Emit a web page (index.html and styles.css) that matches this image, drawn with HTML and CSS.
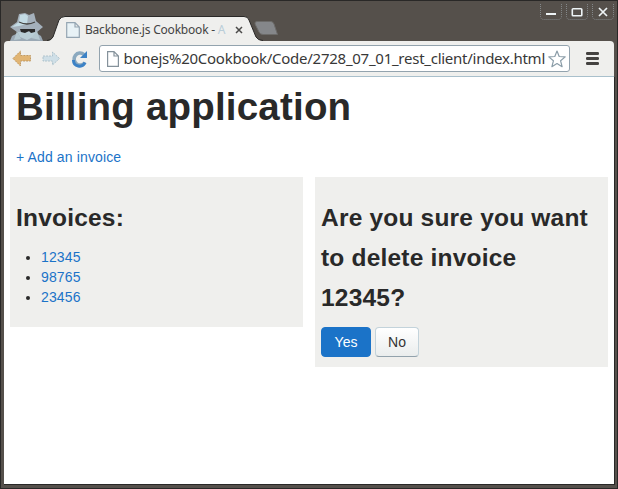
FILE: index.html
```html
<!DOCTYPE html>
<html lang="en">
<head>
<meta charset="utf-8">
<title>Backbone.js Cookbook</title>
<link rel="stylesheet" href="styles.css">
</head>
<body>
<div class="window">
  <header class="titlebar">
    <svg class="incognito" width="36" height="28" viewBox="0 0 36 28">
      <path d="M1 28 3 23 9 20H27L32 23 34 28Z" fill="#9ba9b5"/>
      <path d="M8 11H28V18L24 24 18 27 11 24 8 18Z" fill="#b9cdd5"/>
      <path d="M1 14 8 9 10 1 16 0 20 2 25 0 27 8 34 14 28 19H8Z" fill="#a4b0bb"/>
      <path d="M10 9 11 2 16 1 19 3 18 11 10 13 3 14Z" fill="#c3dbe4"/>
      <path d="M10 9Q18 13 26 9" fill="none" stroke="#454341" stroke-width="1.3"/>
      <path d="M11 16H26V19L22 20 20 18 16 20 12 19Z" fill="#292929"/>
      <path d="m8 18 4 8-7 1zM22 25l6-7 3 9z" fill="#b4c7cf"/>
    </svg>
    <div class="tab">
      <svg class="tab-shape" width="216" height="25" viewBox="0 0 216 25">
        <path d="M0 25Q4 25 6 21L12 4Q14 .5 18 .5H197Q201 .5 202 4L209 21Q211 24 216 25Z" fill="#efefed"/>
        <path d="M0 24.5Q4 24.5 6 21L12 4Q14 .5 18 .5H197Q201 .5 202 4L209 21Q211 24.5 216 24.5" fill="none" stroke="#292827"/>
      </svg>
      <svg class="page-icon" width="14" height="16" viewBox="0 0 14 16"><path d="M.7.7H9L13.3 5V15.3H.7ZM9 .7V5H13.3" fill="#e8f2f6" stroke="#94a5b2" stroke-width="1.2"/></svg>
      <span class="tab-title">Backbone.js Cookbook - <i>A</i></span>
      <svg class="tab-close" width="8" height="8" viewBox="0 0 8 8"><path d="m1 1 6 6m0-6L1 7" stroke="#4b4a49" stroke-width="1.5"/></svg>
    </div>
    <svg class="new-tab" width="25" height="15" viewBox="0 0 25 15"><path d="M3 .5H17Q19 .5 20 3L23.500 13.500H9Q6 13.500 5 11L1 3Q.5.5 3 .5Z" fill="#85878a" stroke="#6c6b69"/></svg>
    <div class="controls">
      <svg width="22" height="17" viewBox="0 0 22 17"><path d="M.5 0V12Q.5 15.500 4 15.500H18Q21.500 15.500 21.500 12V0" fill="none" stroke="#84888a" stroke-dasharray="1 1"/><path d="M6 10H16" stroke="#eef4f6" stroke-width="2"/></svg>
      <svg width="22" height="17" viewBox="0 0 22 17"><path d="M.5 0V12Q.5 15.500 4 15.500H18Q21.500 15.500 21.500 12V0" fill="none" stroke="#84888a" stroke-dasharray="1 1"/><rect x="6.300" y="4.800" width="9.500" height="7" rx=".8" fill="none" stroke="#eef4f6" stroke-width="1.600"/></svg>
      <svg width="22" height="17" viewBox="0 0 22 17"><path d="M.5 0V12Q.5 15.500 4 15.500H18Q21.500 15.500 21.500 12V0" fill="none" stroke="#84888a" stroke-dasharray="1 1"/><path d="m7 4 8 8m0-8-8 8" stroke="#eef4f6" stroke-width="1.700"/></svg>
    </div>
  </header>
  <nav class="toolbar">
    <svg width="20" height="17" viewBox="0 0 20 17"><path d="M1 8.500 8.500 1V5.500H18.500V11H8.500V16Z" fill="#e1b574" stroke="#b58b52" stroke-width=".8" stroke-dasharray="2 1"/></svg>
    <svg class="forward" width="19" height="17" viewBox="0 0 19 17"><path d="M17.500 8.500 10.500 2V6H1V11H10.500V15Z" fill="#cfdfe7" stroke="#a9bfca" stroke-width=".9" stroke-dasharray="2 1"/></svg>
    <svg class="reload" width="17" height="18" viewBox="0 0 17 18"><path d="M13 4.500A6 6 0 1 0 14 12.500" fill="none" stroke="#8ba9bf" stroke-width="3.600"/><path d="M2.500 10A6 6 0 0 0 14 12.500" fill="none" stroke="#3c82c6" stroke-width="3"/><path d="M16 1V8H9Z" fill="#3c82c6"/></svg>
    <div class="address">
      <svg class="address-icon" width="12" height="16" viewBox="0 0 12 16"><path d="M.6.6H7L11.400 5V15.400H.6ZM7 .6V5H11.400" fill="#fff" stroke="#85929b" stroke-width="1.200"/></svg>
      <div class="url"><span>bonejs%20Cookbook/Code/2728_07_01_rest_client/index.html</span></div>
      <svg class="star" width="18" height="18" viewBox="0 0 18 18"><path d="m9 1 2.200 5.500 6 .4-4.600 3.900 1.500 5.900L9 13.500l-5.100 3.200 1.500-5.900L.8 6.900l6-.4Z" fill="#fff" stroke="#8b9da8" stroke-width="1.200" stroke-linejoin="round"/></svg>
    </div>
    <svg class="menu" width="13" height="13" viewBox="0 0 13 13"><path d="M1.300 1.500H11.700M1.300 6.500H11.700M1.300 11.500H11.700" stroke="#444240" stroke-width="2.800" stroke-linecap="round"/></svg>
  </nav>
  <main class="page">
    <h1>Billing application</h1>
    <a class="add" href="#">+ Add an invoice</a>
    <div class="columns">
      <section class="panel">
        <h2>Invoices:</h2>
        <ul>
          <li><a href="#">12345</a></li>
          <li><a href="#">98765</a></li>
          <li><a href="#">23456</a></li>
        </ul>
      </section>
      <section class="panel">
        <h2>Are you sure you want to delete invoice 12345?</h2>
        <div class="actions"><button class="btn primary">Yes</button><button class="btn">No</button></div>
      </section>
    </div>
  </main>
</div>
</body>
</html>
```
FILE: styles.css
```css
* { box-sizing: border-box; }
body { margin: 0; font: 14px/20px "Liberation Sans", Arial, sans-serif; color: #292929; }
a { color: #1b73c8; text-decoration: none; letter-spacing: .13px; }
svg { display: block; flex: none; }
.window {
  width: 618px;
  height: 489px;
  display: flex;
  flex-direction: column;
  padding: 0 4px 4px;
  background: #55504b;
  border-top: 1px solid #292827;
  box-shadow: inset 1px 0 #292827, inset -1px -1px #292827;
  overflow: hidden;
}
.titlebar { height: 40px; display: flex; align-items: flex-start; flex: none; }
.incognito { margin: 12px 0 0 5px; }
.tab { position: relative; width: 216px; height: 25px; margin: 15px 0 0 2px; display: flex; align-items: center; padding-left: 19px; }
.tab-shape { position: absolute; left: 0; top: 0; }
.page-icon, .tab-title, .tab-close { position: relative; }
.page-icon { margin-top: 2px; }
.tab-title { width: 143px; margin-left: 5px; margin-top: 2px; font: 12px/20px "Noto Sans", sans-serif; letter-spacing: -.21px; white-space: nowrap; color: #444; }
.tab-title i { font-style: normal; color: #b9cdd8; }
.tab-close { margin-left: 7px; margin-top: 2px; }
.new-tab { margin: 20px 0 0 -9px; }
.controls { display: flex; gap: 4px; margin: 3px 0 0 auto; }
.toolbar {
  height: 36px;
  flex: none;
  display: flex;
  align-items: center;
  padding: 0 15px 0 8px;
  background: #efefed;
  border-bottom: 1px solid #a9c0cc;
  border-radius: 4px 4px 0 0;
}
.forward { margin-left: 10px; }
.reload { margin-left: 10px; }
.address { width: 471px; height: 27px; margin-left: 11px; padding: 0 3px 0 7px; display: flex; align-items: center; background: #fff; border: 1px solid #93a3ae; border-radius: 3px; }
.url { flex: 1; height: 24px; margin: -2px 3px 0 4px; display: flex; justify-content: flex-end; overflow: hidden; font: 15px/24px "Noto Sans", sans-serif; letter-spacing: -.26px; color: #383838; white-space: nowrap; }
.menu { margin-left: auto; }
.page { flex: 1; padding: 10px 6px 0; background: #fff; border-bottom: 1px solid #292827; border-right: 1px solid #292827; margin-right: -1px; }
h1, h2 { margin: 0; line-height: 40px; }
h1 { padding-left: 6px; font-size: 38.5px; letter-spacing: .2px; }
.add { display: block; margin: 20px 0 10px 6px; }
.columns { display: flex; align-items: flex-start; gap: 12px; }
.panel { width: 293px; padding: 21px 6px 10px; background: #efefed; }
h2 { font-size: 24.500px; letter-spacing: .2px; }
ul { margin: 9px 0 10px; padding-left: 25px; }
.actions { display: flex; gap: 4px; margin-top: 9px; }
.btn { width: 44px; height: 30px; padding: 0; font: inherit; color: #333; background: linear-gradient(#fff, #eaeded); border: 1px solid #c3d3db; border-bottom-color: #92a2ac; border-radius: 4px; }
.primary { width: 50px; color: #fff; background: #1b73c8; border-color: #1b73c8; }
```
